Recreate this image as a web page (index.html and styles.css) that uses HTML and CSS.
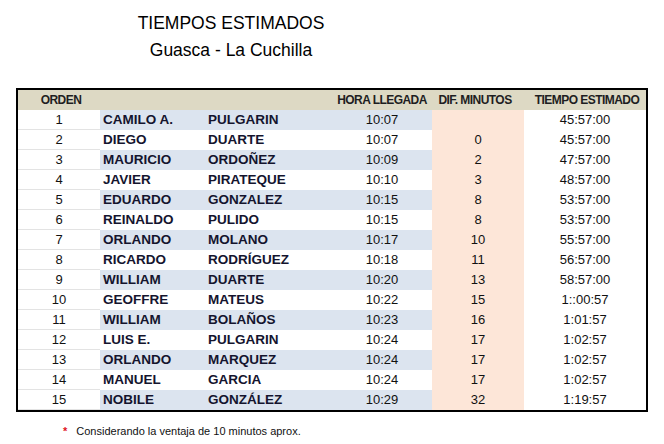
FILE: index.html
```html
<!DOCTYPE html>
<html lang="es">
<head>
<meta charset="utf-8">
<title>Tiempos Estimados</title>
<link rel="stylesheet" href="styles.css">
</head>
<body>
<header class="titles">
  <h1 class="title">TIEMPOS ESTIMADOS</h1>
  <h2 class="subtitle">Guasca - La Cuchilla</h2>
</header>
<table class="grid">
  <colgroup>
    <col class="c-orden"><col class="c-nombre"><col class="c-apellido"><col class="c-hora"><col class="c-dif"><col class="c-tiempo">
  </colgroup>
  <thead>
    <tr>
      <th class="h-orden">ORDEN</th>
      <th></th>
      <th></th>
      <th>HORA LLEGADA</th>
      <th class="h-dif">DIF. MINUTOS</th>
      <th class="h-tiempo">TIEMPO ESTIMADO</th>
    </tr>
  </thead>
  <tbody>
    <tr class="odd"><td class="orden">1</td><td class="name">CAMILO A.</td><td class="name">PULGARIN</td><td class="num">10:07</td><td class="dif"></td><td class="tiempo">45:57:00</td></tr>
    <tr><td class="orden">2</td><td class="name">DIEGO</td><td class="name">DUARTE</td><td class="num">10:07</td><td class="dif">0</td><td class="tiempo">45:57:00</td></tr>
    <tr class="odd"><td class="orden">3</td><td class="name">MAURICIO</td><td class="name">ORDOÑEZ</td><td class="num">10:09</td><td class="dif">2</td><td class="tiempo">47:57:00</td></tr>
    <tr><td class="orden">4</td><td class="name">JAVIER</td><td class="name">PIRATEQUE</td><td class="num">10:10</td><td class="dif">3</td><td class="tiempo">48:57:00</td></tr>
    <tr class="odd"><td class="orden">5</td><td class="name">EDUARDO</td><td class="name">GONZALEZ</td><td class="num">10:15</td><td class="dif">8</td><td class="tiempo">53:57:00</td></tr>
    <tr><td class="orden">6</td><td class="name">REINALDO</td><td class="name">PULIDO</td><td class="num">10:15</td><td class="dif">8</td><td class="tiempo">53:57:00</td></tr>
    <tr class="odd"><td class="orden">7</td><td class="name">ORLANDO</td><td class="name">MOLANO</td><td class="num">10:17</td><td class="dif">10</td><td class="tiempo">55:57:00</td></tr>
    <tr><td class="orden">8</td><td class="name">RICARDO</td><td class="name">RODRÍGUEZ</td><td class="num">10:18</td><td class="dif">11</td><td class="tiempo">56:57:00</td></tr>
    <tr class="odd"><td class="orden">9</td><td class="name">WILLIAM</td><td class="name">DUARTE</td><td class="num">10:20</td><td class="dif">13</td><td class="tiempo">58:57:00</td></tr>
    <tr><td class="orden">10</td><td class="name">GEOFFRE</td><td class="name">MATEUS</td><td class="num">10:22</td><td class="dif">15</td><td class="tiempo">1::00:57</td></tr>
    <tr class="odd"><td class="orden">11</td><td class="name">WILLIAM</td><td class="name">BOLAÑOS</td><td class="num">10:23</td><td class="dif">16</td><td class="tiempo">1:01:57</td></tr>
    <tr><td class="orden">12</td><td class="name">LUIS E.</td><td class="name">PULGARIN</td><td class="num">10:24</td><td class="dif">17</td><td class="tiempo">1:02:57</td></tr>
    <tr class="odd"><td class="orden">13</td><td class="name">ORLANDO</td><td class="name">MARQUEZ</td><td class="num">10:24</td><td class="dif">17</td><td class="tiempo">1:02:57</td></tr>
    <tr><td class="orden">14</td><td class="name">MANUEL</td><td class="name">GARCIA</td><td class="num">10:24</td><td class="dif">17</td><td class="tiempo">1:02:57</td></tr>
    <tr class="odd"><td class="orden">15</td><td class="name">NOBILE</td><td class="name">GONZÁLEZ</td><td class="num">10:29</td><td class="dif">32</td><td class="tiempo">1:19:57</td></tr>
  </tbody>
</table>
<p class="note"><span class="star">*</span><span>Considerando la ventaja de 10 minutos aprox.</span></p>
</body>
</html>
```

FILE: styles.css
```css
html, body {
  margin: 0;
  padding: 0;
  background: #ffffff;
}
body {
  font-family: "Liberation Sans", Arial, sans-serif;
  color: #111111;
  width: 664px;
  height: 444px;
  overflow: hidden;
}
.titles {
  width: 462px;
  padding-top: 13px;
  text-align: center;
}
.title,
.subtitle {
  margin: 0;
  font-weight: normal;
  font-size: 17.5px;
  line-height: 20px;
  color: #000;
}
.subtitle {
  margin-top: 7px;
}
.grid {
  margin-top: 28px;
  margin-left: 16px;
  border: 2px solid #000;
  border-collapse: separate;
  border-spacing: 0;
  table-layout: fixed;
  width: 632px;
}
.c-orden { width: 82px; }
.c-nombre { width: 105px; }
.c-apellido { width: 127px; }
.c-hora { width: 100px; }
.c-dif { width: 92px; }
.c-tiempo { width: 122px; }
.grid th {
  background: #ddd9c4;
  height: 20px;
  padding: 0;
  font-family: "Liberation Sans", Arial, sans-serif;
  font-weight: bold;
  font-size: 12px;
  letter-spacing: -0.55px;
  color: #1e1e22;
  text-align: center;
  white-space: nowrap;
}
.grid th.h-orden {
  padding-left: 4px;
}
.grid th.h-dif {
  padding-right: 6px;
}
.grid th.h-tiempo {
  padding-left: 4px;
}
.grid td {
  height: 20px;
  padding: 0;
  white-space: nowrap;
  font-size: 13px;
  line-height: 20px;
}
.grid td.orden {
  text-align: center;
  background: #ffffff;
  box-shadow: inset 0 -1px 0 #e3e3e3;
}
.grid td.name {
  font-weight: bold;
  font-size: 13.5px;
  color: #14142e;
  padding-left: 3px;
}
.grid td.num {
  text-align: center;
}
.grid tr.odd td.name,
.grid tr.odd td.num {
  background: #dce4ef;
}
.grid td.dif {
  background: #fde6d8;
  text-align: center;
}
.grid td.tiempo {
  text-align: center;
  background: #ffffff;
}
.note {
  margin: 13px 0 0 0;
  padding-left: 63px;
  display: flex;
  align-items: baseline;
  gap: 9px;
  font-size: 11px;
  line-height: 13px;
  color: #111;
}
.star {
  color: #e0141e;
  font-weight: bold;
  font-size: 11px;
}
```
